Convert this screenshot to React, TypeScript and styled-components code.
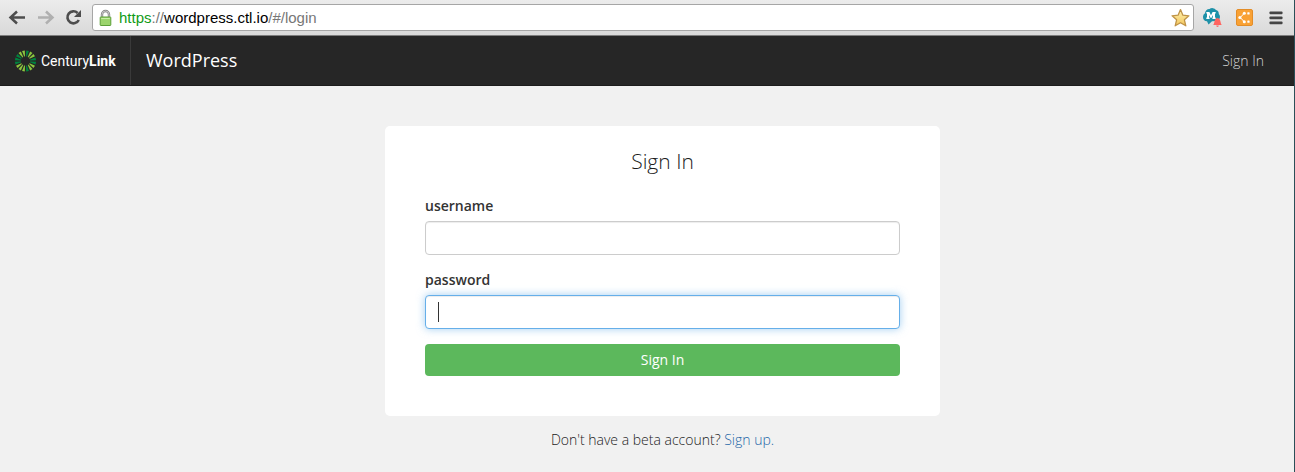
import React from "react";
import styled, { createGlobalStyle } from "styled-components";

const GlobalStyle = createGlobalStyle`
  *, *::before, *::after { box-sizing: border-box; }
  html { background: #f1f1f1; }
  body {
    margin: 0;
    font-family: "Open Sans", "Liberation Sans", sans-serif;
    font-size: 14px;
    line-height: 20px;
    color: #333;
  }
`;

const Page = styled.div`
  min-height: 100vh;
  background: #f1f1f1;
  border-right: 1px solid #2b4f58;
`;

const Toolbar = styled.div`
  display: flex;
  align-items: center;
  height: 36px;
  padding: 0 11px 0 8px;
  background: linear-gradient(#ececec, #d9d9d9);
  border-bottom: 1px solid #7d7d7d;
`;

const IconButton = styled.button<{ $gap?: number }>`
  display: flex;
  flex: none;
  padding: 0;
  margin-right: ${(p) => p.$gap ?? 0}px;
  border: 0;
  background: none;
`;

const AddressBar = styled.div`
  display: flex;
  flex: 1;
  align-items: center;
  height: 27px;
  margin: 0 8px;
  padding: 0 2px 0 6px;
  background: #fff;
  border: 1px solid #a6a6a6;
  border-radius: 3px;
`;

const Url = styled.div`
  flex: 1;
  margin-left: 7px;
  font: 15px/20px "Liberation Sans", sans-serif;
  color: #000;
  outline: 0;
`;

const UrlPart = styled.span<{ $secure?: boolean }>`
  color: ${(p) => (p.$secure ? "#0f9b18" : "#777")};
`;

const Navbar = styled.nav`
  display: flex;
  align-items: stretch;
  height: 50px;
  background: #262626;
  border-bottom: 1px solid #1c1c1c;
`;

const Brand = styled.a`
  display: flex;
  align-items: center;
  gap: 4px;
  width: 131px;
  padding-left: 14px;
  border-right: 1px solid #3a3a3a;
  font-family: Roboto, sans-serif;
  font-size: 14px;
  color: #fff;
  text-decoration: none;
`;

const Product = styled.a`
  flex: 1;
  padding: 14px 15px;
  font-size: 18px;
  color: #fff;
  text-decoration: none;
`;

const NavLink = styled.a`
  padding: 15px 30px;
  font-weight: 300;
  color: #d4d4d4;
  text-decoration: none;
`;

const Main = styled.main`
  display: flex;
  flex-direction: column;
  align-items: center;
  padding: 40px 0 20px 31px;
`;

const Card = styled.form`
  width: 100%;
  max-width: 555px;
  padding: 20px 40px 40px;
  background: #fff;
  border-radius: 5px;
`;

const Title = styled.h1`
  margin: 0 0 20px;
  font-size: 21px;
  font-weight: 300;
  line-height: 30px;
  text-align: center;
  color: #1c1c1c;
`;

const Field = styled.div`
  position: relative;
  margin-bottom: 15px;
`;

const Label = styled.label`
  display: block;
  margin-bottom: 5px;
  font-weight: 600;
`;

const TextInput = styled.input<{ $active?: boolean }>`
  display: block;
  width: 100%;
  height: 34px;
  padding: 6px 12px;
  font: inherit;
  color: #555;
  background: #fff;
  border: 1px solid ${(p) => (p.$active ? "#66afe9" : "#ccc")};
  border-radius: 4px;
  outline: 0;
  caret-color: transparent;
  box-shadow: inset 0 1px 1px rgba(0, 0, 0, 0.075)
    ${(p) => (p.$active ? ", 0 0 8px rgba(102, 175, 233, 0.6)" : "")};
`;

const Caret = styled.span`
  position: absolute;
  left: 13px;
  bottom: 7px;
  width: 1px;
  height: 20px;
  background: #333;
`;

const Submit = styled.button`
  display: block;
  width: 100%;
  height: 32px;
  padding: 0;
  font: inherit;
  color: #fff;
  background: #5cb85c;
  border: 0;
  border-radius: 4px;
`;

const Note = styled.p`
  margin: 14px 0 0;
  font-weight: 300;
  color: #1c1c1c;
`;

const Link = styled.a`
  color: #1f67a8;
  text-decoration: none;
`;

const Arrow = ({ color, flip }: { color: string; flip?: boolean }) => (
  <svg width="20" height="20" viewBox="0 0 20 20" fill="none" stroke={color} strokeWidth="2.5">
    <path d={flip ? "M2 9.5H16M10 3.5L16.5 9.5L10 15.5" : "M17 9.5H3M9 3.5L2.5 9.5L9 15.5"} />
  </svg>
);

const Reload = () => (
  <svg width="20" height="20" viewBox="0 0 20 20">
    <path d="M13.6 5A6 6 0 1 0 14.8 12" fill="none" stroke="#4d4d4d" strokeWidth="2.6" />
    <path d="M17 2V9H10Z" fill="#4d4d4d" />
  </svg>
);

const Lock = () => (
  <svg width="13" height="18" viewBox="0 0 13 18">
    <path d="M3 9V5.5a3.5 3.5 0 0 1 7 0V9" fill="none" stroke="#858585" strokeWidth="2.4" />
    <path d="M3 9V5.5a3.5 3.5 0 0 1 7 0V9" fill="none" stroke="#d8d8d8" strokeWidth="0.8" />
    <rect x="1.2" y="8" width="10.6" height="8.5" rx="0.6" fill="#9bd46c" stroke="#5c9f38" />
    <path d="M2.2 9.5h8.6" stroke="#c8efa5" />
  </svg>
);

const Star = () => (
  <svg width="20" height="20" viewBox="0 0 20 20">
    <defs>
      <linearGradient id="starFill" x2="0" y2="1">
        <stop stopColor="#fff2b0" />
        <stop offset="1" stopColor="#f3c65c" />
      </linearGradient>
    </defs>
    <path
      d="M9.5 1.6L11.9 7.2L17.9 7.8L13.4 11.8L14.8 17.8L9.5 14.7L4.2 17.8L5.6 11.8L1.1 7.8L7.1 7.2Z"
      fill="url(#starFill)"
      stroke="#bf9347"
      strokeWidth="1.3"
      strokeLinejoin="round"
    />
  </svg>
);

const CloudBell = () => (
  <svg width="20" height="20" viewBox="0 0 20 20">
    <path
      d="M5 13.3A4.3 4.3 0 0 1 1 9A4 4 0 0 1 3 5.3A4.3 4.3 0 0 1 7.5 1A4.6 4.6 0 0 1 14 2A4 4 0 0 1 16.8 6A4.2 4.2 0 0 1 14.5 13L10 13.3L6.5 16.5Z"
      fill="#1e91a8"
    />
    <path
      d="M4.3 4H7.4L9 7.2L10.6 4H13.7V5.4H13V9.6H13.7V11H10.4V9.6H11V7L9.6 9.8H8.4L7 7V9.6H7.6V11H4.3V9.6H5V5.4H4.3Z"
      fill="#fff"
    />
    <path d="M11.2 17C12.8 15.5 12 10.5 15 10.2A0.7 0.7 0 0 1 16 10.2C19 10.5 18.2 15.5 19.8 17ZM14.2 17.6h2.6a1.3 1.3 0 0 1-2.6 0Z" fill="#ff6560" />
  </svg>
);

const DotsTile = () => (
  <svg width="17" height="17" viewBox="0 0 17 17">
    <rect x="0.5" y="0.5" width="16" height="16" rx="1.5" fill="#f9a134" stroke="#e38d28" />
    <path d="M8 4.5L4.3 8.5L8 12.5" fill="none" stroke="#fff" strokeWidth="1" />
    <g fill="#fff">
      <circle cx="3.8" cy="8.5" r="1.5" />
      <circle cx="8.3" cy="4.3" r="1.5" />
      <circle cx="8.3" cy="12.7" r="1.5" />
      <rect x="11.3" y="3.2" width="2.3" height="2.3" rx="0.6" />
      <rect x="11.3" y="11.5" width="2.3" height="2.3" rx="0.6" />
    </g>
  </svg>
);

const Menu = () => (
  <svg width="14" height="14" viewBox="0 0 14 14" fill="#454545">
    <rect x="0.5" y="0.5" width="13" height="2.8" rx="0.8" />
    <rect x="0.5" y="5.5" width="13" height="2.8" rx="0.8" />
    <rect x="0.5" y="10.5" width="13" height="2.8" rx="0.8" />
  </svg>
);

const LIME = "#8cc63f";
const GREEN = "#00853f";
const spokes = [GREEN, LIME, LIME, GREEN, GREEN, LIME, LIME, GREEN, LIME, LIME, LIME, GREEN, GREEN, GREEN, LIME, LIME];

const Sunburst = () => (
  <svg width="23" height="22" viewBox="-11.5 -11 23 22">
    {spokes.map((fill, i) => (
      <path key={i} d="M-1.4 -10.5L1.4 -10.5L0.4 -4.6L-0.4 -4.6Z" fill={fill} transform={`rotate(${i * 22.5 + 11.25})`} />
    ))}
  </svg>
);

export default function App() {
  return (
    <>
      <GlobalStyle />
      <Page>
        <Toolbar>
          <IconButton $gap={8} aria-label="Back"><Arrow color="#4d4d4d" /></IconButton>
          <IconButton $gap={8} aria-label="Forward"><Arrow color="#b0b0b0" flip /></IconButton>
          <IconButton aria-label="Reload"><Reload /></IconButton>
          <AddressBar>
            <Lock />
            <Url role="textbox" aria-label="Address" contentEditable suppressContentEditableWarning spellCheck={false}>
              <UrlPart $secure>https</UrlPart>
              <UrlPart>://</UrlPart>wordpress.ctl.io<UrlPart>/#/login</UrlPart>
            </Url>
            <IconButton aria-label="Bookmark"><Star /></IconButton>
          </AddressBar>
          <IconButton $gap={14} aria-label="Notifications"><CloudBell /></IconButton>
          <IconButton $gap={16} aria-label="Extension"><DotsTile /></IconButton>
          <IconButton aria-label="Menu"><Menu /></IconButton>
        </Toolbar>
        <Navbar>
          <Brand href="#">
            <Sunburst />
            <span>Century<b>Link</b></span>
          </Brand>
          <Product href="#">WordPress</Product>
          <NavLink href="#/login">Sign In</NavLink>
        </Navbar>
        <Main>
          <Card onSubmit={(e) => e.preventDefault()}>
            <Title>Sign In</Title>
            <Field>
              <Label htmlFor="username">username</Label>
              <TextInput id="username" type="text" />
            </Field>
            <Field>
              <Label htmlFor="password">password</Label>
              <TextInput id="password" type="password" $active autoFocus />
              <Caret />
            </Field>
            <Submit type="submit">Sign In</Submit>
          </Card>
          <Note>
            Don't have a beta account? <Link href="#/signup">Sign up.</Link>
          </Note>
        </Main>
      </Page>
    </>
  );
}
